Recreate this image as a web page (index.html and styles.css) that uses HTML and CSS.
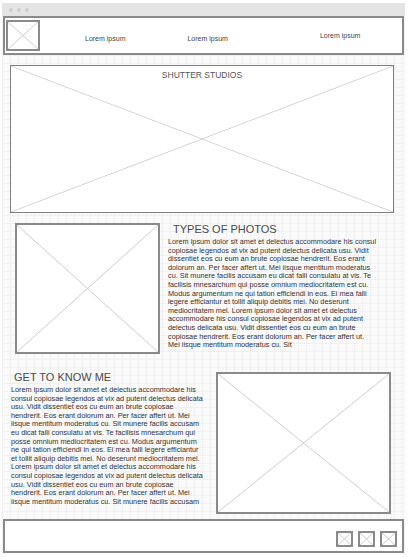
FILE: index.html
```html
<!DOCTYPE html>
<html lang="en">
<head>
    <meta charset="UTF-8">
    <meta name="viewport" content="width=device-width, initial-scale=1.0">
    <title>Shutter Studios</title>
    <link rel="stylesheet" href="styles.css">
</head>
<body>
    <div class="window">
        <div class="chrome">
            <span class="dot"></span>
            <span class="dot"></span>
            <span class="dot"></span>
        </div>

        <header class="header">
            <div class="ph logo"></div>
            <a class="nav-link nav-1">Lorem ipsum</a>
            <a class="nav-link nav-2">Lorem ipsum</a>
            <a class="nav-link nav-3">Lorem ipsum</a>
        </header>

        <main class="content">
            <section class="ph hero">
                <h1 class="hero-title">SHUTTER STUDIOS</h1>
            </section>

            <section class="types">
                <div class="ph types-img"></div>
                <div class="types-text">
                    <h2 class="section-title types-title">TYPES OF PHOTOS</h2>
                    <p class="copy">Lorem ipsum dolor sit amet et delectus accommodare his consul<br>
                    copiosae legendos at vix ad putent delectus delicata usu. Vidit<br>
                    dissentiet eos cu eum an brute copiosae hendrerit. Eos erant<br>
                    dolorum an. Per facer affert ut. Mei iisque mentitum moderatus<br>
                    cu. Sit munere facilis accusam eu dicat falli consulatu at vis. Te<br>
                    facilisis mnesarchum qui posse omnium mediocritatem est cu.<br>
                    Modus argumentum ne qui tation efficiendi in eos. Ei mea falli<br>
                    legere efficiantur et tollit aliquip debitis mei. No deserunt<br>
                    mediocritatem mel. Lorem ipsum dolor sit amet et delectus<br>
                    accommodare his consul copiosae legendos at vix ad putent<br>
                    delectus delicata usu. Vidit dissentiet eos cu eum an brute<br>
                    copiosae hendrerit. Eos erant dolorum an. Per facer affert ut.<br>
                    Mei iisque mentitum moderatus cu. Sit</p>
                </div>
            </section>

            <section class="about">
                <div class="about-text">
                    <h2 class="section-title about-title">GET TO KNOW ME</h2>
                    <p class="copy">Lorem ipsum dolor sit amet et delectus accommodare his<br>
                    consul copiosae legendos at vix ad putent delectus delicata<br>
                    usu. Vidit dissentiet eos cu eum an brute copiosae<br>
                    hendrerit. Eos erant dolorum an. Per facer affert ut. Mei<br>
                    iisque mentitum moderatus cu. Sit munere facilis accusam<br>
                    eu dicat falli consulatu at vis. Te facilisis mnesarchum qui<br>
                    posse omnium mediocritatem est cu. Modus argumentum<br>
                    ne qui tation efficiendi in eos. Ei mea falli legere efficiantur<br>
                    et tollit aliquip debitis mei. No deserunt mediocritatem mel.<br>
                    Lorem ipsum dolor sit amet et delectus accommodare his<br>
                    consul copiosae legendos at vix ad putent delectus delicata<br>
                    usu. Vidit dissentiet eos cu eum an brute copiosae<br>
                    hendrerit. Eos erant dolorum an. Per facer affert ut. Mei<br>
                    iisque mentitum moderatus cu. Sit munere facilis accusam</p>
                </div>
                <div class="ph about-img"></div>
            </section>
        </main>

        <footer class="footer">
            <div class="ph social"></div>
            <div class="ph social"></div>
            <div class="ph social"></div>
        </footer>
    </div>
</body>
</html>
```

FILE: styles.css
```css
* {
    box-sizing: border-box;
}

body {
    margin: 0;
    background: #fff;
    font-family: "Liberation Sans", Arial, sans-serif;
    color: #555;
}

.window {
    width: 403px;
    height: 550px;
    margin: 3px 0 0 2px;
    background: #f2f2f2;
    display: flex;
    flex-direction: column;
}

.chrome {
    height: 13px;
    background: #e4e4e4;
    display: flex;
    align-items: center;
    gap: 4px;
    padding-left: 7px;
}

.dot {
    width: 4px;
    height: 4px;
    border-radius: 50%;
    background: #cfcfcf;
}

/* placeholder boxes with a cross */
.ph {
    background-color: #fff;
    background-image:
        linear-gradient(to top right, transparent calc(50% - 0.8px), #cfcfcf, transparent calc(50% + 0.8px)),
        linear-gradient(to bottom right, transparent calc(50% - 0.8px), #cfcfcf, transparent calc(50% + 0.8px));
    border: 2px solid #8a8a8a;
}

.header {
    height: 39px;
    margin: 0 1px;
    background: #fff;
    border: 2px solid #8a8a8a;
    display: flex;
    align-items: center;
    padding-left: 1px;
}

.logo {
    width: 34px;
    height: 31px;
}

.nav-link {
    font-size: 7px;
    color: #444;
}

.nav-1 {
    margin-left: 45px;
    margin-top: 6px;
}

.nav-2 {
    margin-left: 62px;
    margin-top: 6px;
}

.nav-3 {
    margin-left: 92px;
}

.content {
    flex: 1;
    background-color: #fafafa;
    background-image:
        linear-gradient(#f0f0f0 1px, transparent 1px),
        linear-gradient(90deg, #f0f0f0 1px, transparent 1px);
    background-size: 8px 8px;
    padding: 10px 0 0 8px;
}

.hero {
    width: 384px;
    height: 148px;
    border-width: 1.5px;
    border-color: #808080;
    text-align: center;
}

.hero-title {
    margin: 4px 0 0;
    font-size: 8.5px;
    font-weight: normal;
    color: #555;
}

.types {
    display: flex;
    margin-top: 10px;
    padding-left: 5px;
}

.types-img {
    width: 145px;
    height: 131px;
}

.types-text {
    margin-left: 8px;
}

.section-title {
    margin: 0;
    font-size: 11px;
    font-weight: normal;
    color: #4a4a4a;
    line-height: 13px;
}

.types-title {
    padding-left: 5px;
}

.copy {
    margin: 2px 0 0;
    font-size: 7.3px;
    line-height: 8.6px;
    color: #333;
    white-space: nowrap;
}

.about {
    display: flex;
    margin-top: 16px;
}

.about-text {
    width: 204px;
    padding-left: 1px;
    padding-top: 1px;
}

.about-title {
    padding-left: 3px;
}

.about-img {
    width: 175px;
    height: 142px;
    margin-left: 2px;
    margin-top: 2px;
}

.footer {
    height: 34px;
    margin: 0 1px 0;
    background: #fff;
    border: 2px solid #8a8a8a;
    display: flex;
    justify-content: flex-end;
    align-items: flex-end;
    gap: 5px;
    padding: 0 5px 4px 0;
}

.social {
    width: 17px;
    height: 16px;
}
```
